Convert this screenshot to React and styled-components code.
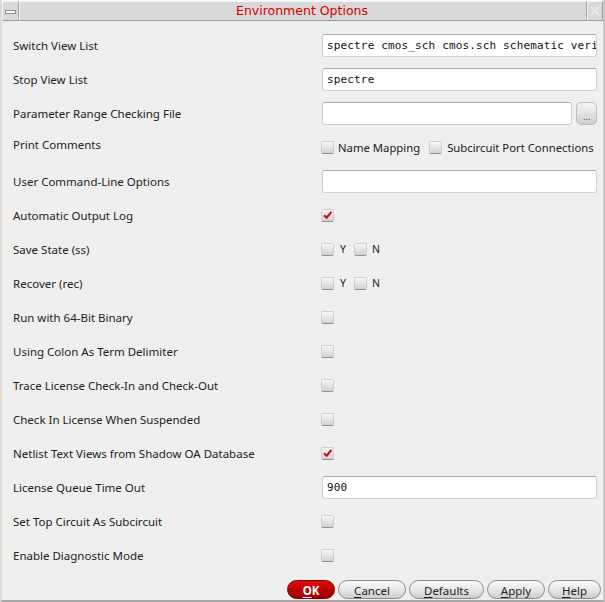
import React from 'react'
import styled, { createGlobalStyle } from 'styled-components'

const GlobalStyle = createGlobalStyle`
  html, body {
    margin: 0;
    padding: 0;
    background: #efefef;
  }
`

const Window = styled.div`
  width: 605px;
  height: 602px;
  box-sizing: border-box;
  display: flex;
  flex-direction: column;
  background: #efefef;
  border-left: 2px solid #e3d9d3;
  border-right: 2px solid #c9c9c9;
  border-bottom: 2px solid #a9a9a9;
  font-family: "Noto Sans", "Open Sans", sans-serif;
  color: #222;
  overflow: hidden;
`

const TitleBar = styled.div`
  display: flex;
  height: 21px;
  border-top: 1px solid #fafafa;
  box-sizing: border-box;
`

const TitleButton = styled.div`
  width: ${p => p.w}px;
  display: flex;
  align-items: center;
  justify-content: center;
  background: #d9d9d9;
  border: 1px solid #f4f4f4;
  border-right-color: #a2a2a2;
  border-bottom-color: #9a9a9a;
  box-sizing: border-box;
`

const TitleCenter = styled.div`
  flex: 1;
  display: flex;
  align-items: center;
  justify-content: center;
  background: #d9d9d9;
  border: 1px solid #f4f4f4;
  border-right-color: #a2a2a2;
  border-bottom-color: #9a9a9a;
  color: #d20000;
  font-family: "DejaVu Sans", sans-serif;
  font-size: 12.5px;
  padding: 0 2px 1px 0;
`

const MinIcon = styled.div`
  width: 9px;
  height: 2px;
  background: #fdfdfd;
  border: 1px solid #8e8e8e;
  margin-top: 1px;
`

const Form = styled.div`
  padding: 7px 6px 0 11px;
  display: flex;
  flex-direction: column;
`

const Row = styled.div`
  display: grid;
  grid-template-columns: 309px 275px;
  height: 34px;
  align-items: center;
`

const Label = styled.div`
  font-size: 11.5px;
  white-space: nowrap;
  margin-top: ${p => (p.raised ? -6 : 0)}px;
`

const Field = styled.div`
  display: flex;
  align-items: center;
`

const Input = styled.div`
  flex: 1;
  height: 23px;
  box-sizing: border-box;
  background: #fff;
  border: 1px solid #d0d0d0;
  border-top-color: #a9a9a9;
  border-radius: 3px;
  padding: 0 4px;
  display: flex;
  align-items: center;
  font-family: "DejaVu Sans Mono", "Liberation Mono", monospace;
  font-size: 11px;
  letter-spacing: 0.15px;
  color: #111;
  white-space: nowrap;
  overflow: hidden;
`

const BrowseButton = styled.div`
  width: 21px;
  height: 23px;
  margin-left: 4px;
  box-sizing: border-box;
  border: 1px solid #bdbdbd;
  border-radius: 5px;
  background: linear-gradient(#f6f6f6, #cfcfcf);
  display: flex;
  align-items: flex-end;
  justify-content: center;
  font-size: 9px;
  line-height: 14px;
  color: #444;
`

const Box = styled.span`
  width: 13px;
  height: 13px;
  margin-left: ${p => (p.first ? -1 : 0)}px;
  box-sizing: border-box;
  border: 1px solid #cfcfcf;
  border-bottom-color: #8f8f8f;
  border-radius: 2px;
  background: linear-gradient(#f7f7f7, #d3d3d3);
  display: inline-flex;
  align-items: center;
  justify-content: center;
  flex: none;
`

const BoxLabel = styled.span`
  font-size: ${p => p.size || 11.3}px;
  margin: 0 ${p => p.after || 0}px 0 ${p => p.before || 0}px;
  white-space: nowrap;
`

const Check = ({ on, first }) => (
  <Box first={first}>
    {on && (
      <svg width="12" height="12" viewBox="0 0 12 12">
        <path d="M2.2 6.2 L5 9 L10.3 2.6" fill="none" stroke="#c4121c" strokeWidth="2.4" strokeLinejoin="round" />
      </svg>
    )}
  </Box>
)

const ButtonBar = styled.div`
  margin-top: auto;
  display: flex;
  justify-content: flex-end;
  gap: 3px;
  padding: 0 2px 1px 0;
`

const Button = styled.div`
  width: ${p => p.w}px;
  height: 19px;
  box-sizing: border-box;
  border-radius: 10px;
  border: 1px solid ${p => (p.primary ? '#7a0000' : '#8c8c8c')};
  background: ${p =>
    p.primary
      ? 'linear-gradient(#e40a0a, #b40000 60%, #9c0000)'
      : 'linear-gradient(#fbfbfb, #e6e6e6 55%, #cdcdcd)'};
  color: ${p => (p.primary ? '#fff' : '#222')};
  font-weight: ${p => (p.primary ? 700 : 400)};
  font-size: 11.5px;
  display: flex;
  align-items: center;
  justify-content: center;
  padding-top: 1px;
  u { text-decoration-thickness: 1px; text-underline-offset: 2px; }
`

const YN = () => (
  <Field>
    <Check first />
    <BoxLabel before={6} after={8} size={10.5}>Y</BoxLabel>
    <Check />
    <BoxLabel before={5} size={10.5}>N</BoxLabel>
  </Field>
)

const single = on => (
  <Field>
    <Check on={on} first />
  </Field>
)

const rows = [
  ['Switch View List', <Field><Input>spectre cmos_sch cmos.sch schematic veriloga</Input></Field>],
  ['Stop View List', <Field><Input>spectre</Input></Field>],
  ['Parameter Range Checking File', <Field><Input /><BrowseButton>...</BrowseButton></Field>],
  ['Print Comments', (
    <Field>
      <Check first />
      <BoxLabel before={4} after={9}>Name Mapping</BoxLabel>
      <Check />
      <BoxLabel before={5}>Subcircuit Port Connections</BoxLabel>
    </Field>
  ), true],
  ['User Command-Line Options', <Field><Input /></Field>],
  ['Automatic Output Log', single(true)],
  ['Save State (ss)', <YN />],
  ['Recover (rec)', <YN />],
  ['Run with 64-Bit Binary', single(false)],
  ['Using Colon As Term Delimiter', single(false)],
  ['Trace License Check-In and Check-Out', single(false)],
  ['Check In License When Suspended', single(false)],
  ['Netlist Text Views from Shadow OA Database', single(true)],
  ['License Queue Time Out', <Field><Input>900</Input></Field>],
  ['Set Top Circuit As Subcircuit', single(false)],
  ['Enable Diagnostic Mode', single(false)],
]

export default function App() {
  return (
    <>
      <GlobalStyle />
      <Window>
        <TitleBar>
          <TitleButton w={17}><MinIcon /></TitleButton>
          <TitleCenter>Environment Options</TitleCenter>
          <TitleButton w={16}>
            <svg width="10" height="10" viewBox="0 0 10 10">
              <path d="M1 1 L9 9 M9 1 L1 9" stroke="#f2f2f2" strokeWidth="2.2" strokeDasharray="1.5 1" />
            </svg>
          </TitleButton>
        </TitleBar>
        <Form>
          {rows.map(([label, field, raised]) => (
            <Row key={label}>
              <Label raised={raised}>{label}</Label>
              {field}
            </Row>
          ))}
        </Form>
        <ButtonBar>
          <Button primary w={48}><u>O</u>K</Button>
          <Button w={68}><u>C</u>ancel</Button>
          <Button w={75}><u>D</u>efaults</Button>
          <Button w={58}><u>A</u>pply</Button>
          <Button w={53}><u>H</u>elp</Button>
        </ButtonBar>
      </Window>
    </>
  )
}
